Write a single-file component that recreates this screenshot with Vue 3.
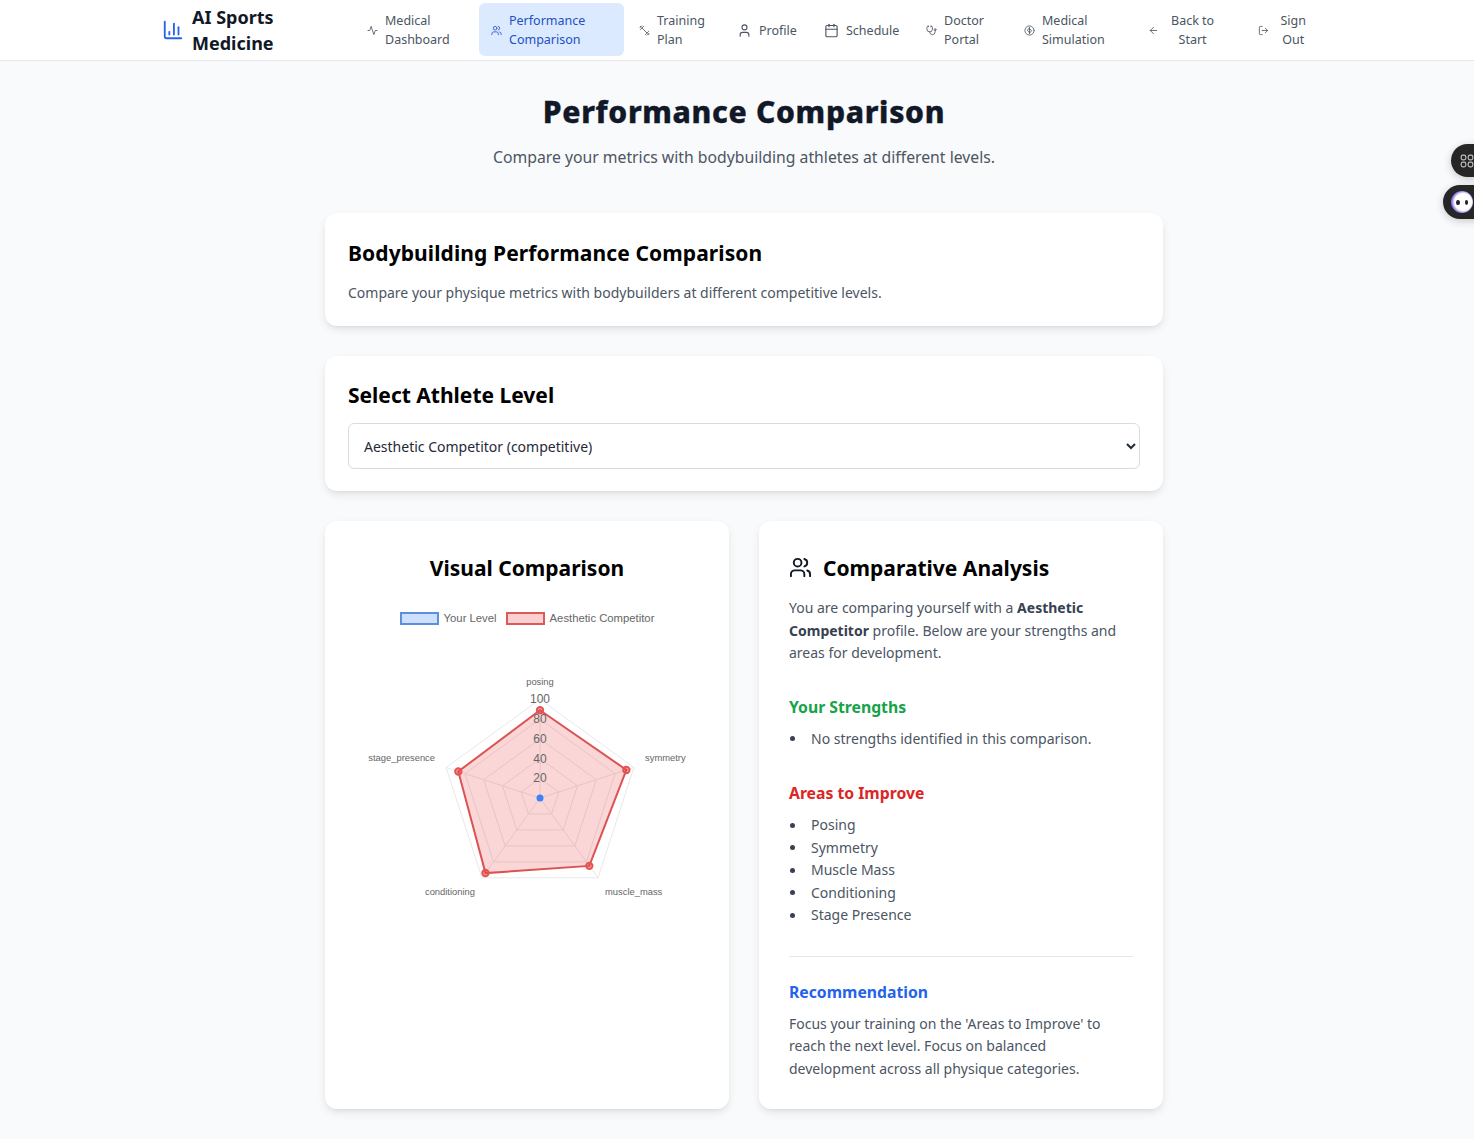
<script setup>
import { computed } from 'vue';

const icons = {
  chart: ['M3 3v16a2 2 0 0 0 2 2h16', 'M18 17V9', 'M13 17V5', 'M8 17v-3'],
  activity: ['M22 12h-4l-3 9L9 3l-3 9H2'],
  users: ['M16 21v-2a4 4 0 0 0-4-4H6a4 4 0 0 0-4 4v2', 'M13 7a4 4 0 1 1-8 0 4 4 0 0 1 8 0', 'M22 21v-2a4 4 0 0 0-3-3.87', 'M16 3.13a4 4 0 0 1 0 7.75'],
  dumbbell: ['m6.5 6.5 11 11', 'm21 21-1-1', 'm3 3 1 1', 'm18 22 4-4', 'm2 6 4-4', 'm3 10 7-7', 'm14 21 7-7'],
  user: ['M19 21v-2a4 4 0 0 0-4-4H9a4 4 0 0 0-4 4v2', 'M16 7a4 4 0 1 1-8 0 4 4 0 0 1 8 0'],
  calendar: ['M8 2v4', 'M16 2v4', 'M5 4h14a2 2 0 0 1 2 2v14a2 2 0 0 1-2 2H5a2 2 0 0 1-2-2V6a2 2 0 0 1 2-2z', 'M3 10h18'],
  stethoscope: ['M11 2v2', 'M5 2v2', 'M5 3H4a2 2 0 0 0-2 2v4a6 6 0 0 0 12 0V5a2 2 0 0 0-2-2h-1', 'M8 15a6 6 0 0 0 12 0v-3', 'M22 10a2 2 0 1 1-4 0 2 2 0 0 1 4 0'],
  simulation: ['M22 12a10 10 0 1 1-20 0 10 10 0 0 1 20 0', 'M12 5v14', 'M12 7c-3 1-4 3-4 5s2 3 4 3', 'M12 9c3 0 4 2 4 4s-2 3-4 3'],
  back: ['m12 19-7-7 7-7', 'M19 12H5'],
  logout: ['M9 21H5a2 2 0 0 1-2-2V5a2 2 0 0 1 2-2h4', 'm16 17 5-5-5-5', 'M21 12H9'],
};

const navItems = [
  { lines: ['Medical', 'Dashboard'], icon: 'activity', width: 121, size: 11 },
  { lines: ['Performance', 'Comparison'], icon: 'users', width: 145, size: 11, active: true },
  { lines: ['Training', 'Plan'], icon: 'dumbbell', width: 95, size: 11 },
  { lines: ['Profile'], icon: 'user', width: 84, size: 15 },
  { lines: ['Schedule'], icon: 'calendar', width: 99, size: 15 },
  { lines: ['Doctor', 'Portal'], icon: 'stethoscope', width: 95, size: 11 },
  { lines: ['Medical', 'Simulation'], icon: 'simulation', width: 121, size: 11 },
  { lines: ['Back to', 'Start'], icon: 'back', width: 106.5, size: 11, center: true },
  { lines: ['Sign', 'Out'], icon: 'logout', width: 78, size: 11, center: true },
];

const strengths = ['No strengths identified in this comparison.'];
const improvements = ['Posing', 'Symmetry', 'Muscle Mass', 'Conditioning', 'Stage Presence'];

// radar chart, chart.js-like geometry
const cx = 215;
const cy = 173;
const unit = 0.987;
const angles = [0, 1, 2, 3, 4].map((i) => (-90 + i * 72) * Math.PI / 180);
const toPoint = (value, i) => [cx + Math.cos(angles[i]) * value * unit, cy + Math.sin(angles[i]) * value * unit];
const polygon = (values) => values.map((v, i) => toPoint(v, i).map((n) => n.toFixed(1)).join(',')).join(' ');

const levels = [20, 40, 60, 80, 100];
const gridLines = levels.map((l) => polygon([l, l, l, l, l]));
const spokes = [0, 1, 2, 3, 4].map((i) => toPoint(100, i));
const competitor = [89, 92, 85, 94, 87];
const competitorLine = computed(() => polygon(competitor));
const competitorDots = computed(() => competitor.map((v, i) => toPoint(v, i)));
const axisLabels = [
  { text: 'posing', x: 215, y: 60, anchor: 'middle' },
  { text: 'symmetry', x: 320, y: 136, anchor: 'start' },
  { text: 'muscle_mass', x: 280, y: 270, anchor: 'start' },
  { text: 'conditioning', x: 150, y: 270, anchor: 'end' },
  { text: 'stage_presence', x: 110, y: 136, anchor: 'end' },
];
</script>

<template>
  <div class="page">
    <header class="topbar">
      <div class="brand">
        <svg class="brand-icon" viewBox="0 0 24 24"><path v-for="d in icons.chart" :key="d" :d="d" /></svg>
        <span class="brand-name">AI Sports Medicine</span>
      </div>
      <nav class="nav">
        <a
          v-for="item in navItems"
          :key="item.lines[0] + item.icon"
          class="nav-item"
          :class="{ active: item.active, center: item.center }"
          :style="{ width: item.width + 'px' }"
        >
          <svg class="nav-icon" :style="{ width: item.size + 'px', height: item.size + 'px' }" viewBox="0 0 24 24">
            <path v-for="d in icons[item.icon]" :key="d" :d="d" />
          </svg>
          <span class="nav-text">
            <span v-for="line in item.lines" :key="line" class="nav-line">{{ line }}</span>
          </span>
        </a>
      </nav>
    </header>

    <main class="content">
      <div class="page-head">
        <h1>Performance Comparison</h1>
        <p>Compare your metrics with bodybuilding athletes at different levels.</p>
      </div>

      <section class="card intro">
        <h2>Bodybuilding Performance Comparison</h2>
        <p>Compare your physique metrics with bodybuilders at different competitive levels.</p>
      </section>

      <section class="card level">
        <h2>Select Athlete Level</h2>
        <select class="level-select">
          <option>Aesthetic Competitor (competitive)</option>
          <option>Beginner (recreational)</option>
          <option>Pro Bodybuilder (elite)</option>
        </select>
      </section>

      <div class="columns">
        <section class="card chart-card">
          <h2 class="chart-title">Visual Comparison</h2>
          <div class="legend">
            <span class="swatch blue"></span><span class="legend-text">Your Level</span>
            <span class="swatch red"></span><span class="legend-text">Aesthetic Competitor</span>
          </div>
          <svg class="radar" width="404" height="340" viewBox="0 0 404 340">
            <polygon v-for="g in gridLines" :key="g" :points="g" class="grid" />
            <line v-for="(s, i) in spokes" :key="i" :x1="cx" :y1="cy" :x2="s[0]" :y2="s[1]" class="grid" />
            <polygon :points="competitorLine" class="area" />
            <circle v-for="(p, i) in competitorDots" :key="i" :cx="p[0]" :cy="p[1]" r="3.2" class="dot" />
            <circle :cx="cx" :cy="cy" r="3.5" class="dot-blue" />
            <text v-for="l in levels" :key="l" :x="cx" :y="cy - l * unit + 4" class="tick">{{ l }}</text>
            <text v-for="a in axisLabels" :key="a.text" :x="a.x" :y="a.y" :text-anchor="a.anchor" class="axis">{{ a.text }}</text>
          </svg>
        </section>

        <section class="card analysis">
          <h2 class="analysis-title">
            <svg class="title-icon" viewBox="0 0 24 24"><path v-for="d in icons.users" :key="d" :d="d" /></svg>
            Comparative Analysis
          </h2>
          <p class="body-text">You are comparing yourself with a <strong>Aesthetic Competitor</strong> profile. Below are your strengths and areas for development.</p>

          <h3 class="green">Your Strengths</h3>
          <ul>
            <li v-for="s in strengths" :key="s">{{ s }}</li>
          </ul>

          <h3 class="red-text">Areas to Improve</h3>
          <ul>
            <li v-for="s in improvements" :key="s">{{ s }}</li>
          </ul>

          <div class="recommendation">
            <h3 class="blue-text">Recommendation</h3>
            <p class="body-text">Focus your training on the 'Areas to Improve' to reach the next level. Focus on balanced development across all physique categories.</p>
          </div>
        </section>
      </div>
    </main>

    <div class="float-btn grid-btn">
      <svg viewBox="0 0 24 24" width="14" height="14"><rect x="2" y="2" width="8" height="8" rx="3" /><rect x="14" y="2" width="8" height="8" rx="3" /><rect x="2" y="14" width="8" height="8" rx="3" /><rect x="14" y="14" width="8" height="8" rx="3" /></svg>
    </div>
    <div class="float-btn bot-btn">
      <span class="bot-face"><i></i><i></i></span>
    </div>
  </div>
</template>

<style>
html, body {
  margin: 0;
  background: #f9fafb;
}
</style>

<style scoped>
.page {
  position: relative;
  min-height: 1139px;
  background: #f9fafb;
  font-family: "Noto Sans", "Open Sans", sans-serif;
  color: #111827;
  overflow: hidden;
}

/* Top bar */
.topbar {
  height: 61px;
  box-sizing: border-box;
  background: #fff;
  border-bottom: 1px solid #e5e7eb;
  display: flex;
  align-items: center;
  padding: 0 0 1px 162px;
}

.brand {
  display: flex;
  align-items: center;
  gap: 8px;
  width: 193px;
  margin-top: 1px;
  flex: none;
}

.brand-icon {
  width: 22px;
  height: 22px;
  fill: none;
  stroke: #2563eb;
  stroke-width: 2;
  stroke-linecap: round;
  stroke-linejoin: round;
}

.brand-name {
  width: 100px;
  font-size: 18px;
  line-height: 26px;
  font-weight: 700;
  color: #111827;
}

.nav {
  display: flex;
  align-items: center;
  gap: 3px;
}

.nav-item {
  display: flex;
  align-items: center;
  gap: 7px;
  box-sizing: border-box;
  height: 53px;
  padding: 1px 12px 0;
  border-radius: 6px;
  font-size: 12.5px;
  line-height: 19px;
  color: #4b5563;
  flex: none;
}

.nav-item.active {
  background: #dbeafe;
  color: #2450c4;
}

.nav-item.center {
  gap: 12px;
  text-align: center;
}

.nav-icon {
  flex: none;
  fill: none;
  stroke: currentColor;
  stroke-width: 1.8;
  stroke-linecap: round;
  stroke-linejoin: round;
}

.nav-line {
  display: block;
  white-space: nowrap;
}

/* Main column */
.content {
  width: 838px;
  margin: 0 0 0 325px;
  padding-bottom: 30px;
}

.page-head {
  text-align: center;
  padding: 28px 0 44px;
}

.page-head h1 {
  margin: 0;
  font-size: 30px;
  line-height: 45px;
  font-weight: 800;
  letter-spacing: 0.7px;
  -webkit-text-stroke: 0.4px #111827;
  color: #111827;
}

.page-head p {
  margin: 11px 0 0;
  font-size: 15.75px;
  line-height: 24px;
  color: #4b5563;
}

.card {
  background: #fff;
  border-radius: 12px;
  box-shadow: 0 4px 10px -1px rgba(0, 0, 0, 0.1), 0 2px 4px -2px rgba(0, 0, 0, 0.08);
  box-sizing: border-box;
}

.card h2 {
  margin: 0;
  font-size: 21px;
  line-height: 33px;
  font-weight: 700;
  color: #000;
}

.intro {
  height: 113px;
  padding: 24px 23px 0;
}

.intro h2 {
  letter-spacing: 0.1px;
}

.intro p {
  margin: 12px 0 0;
  font-size: 14px;
  line-height: 21px;
  color: #4b5563;
}

.level {
  height: 135px;
  margin-top: 30px;
  padding: 23px 23px 0;
}

.level-select {
  display: block;
  width: 100%;
  height: 46px;
  margin-top: 11px;
  padding: 0 11px;
  box-sizing: border-box;
  background: #fff;
  border: 1px solid #d8dce2;
  border-radius: 6px;
  font-family: inherit;
  font-size: 14px;
  color: #1f2937;
}

.columns {
  display: grid;
  grid-template-columns: 1fr 1fr;
  gap: 30px;
  margin-top: 30px;
}

.chart-card,
.analysis {
  height: 588px;
}

.chart-card {
  padding-top: 31px;
}

.chart-title {
  text-align: center;
}

.legend {
  display: flex;
  align-items: center;
  justify-content: center;
  margin-top: 26px;
  height: 14px;
  font-family: "Liberation Sans", Arial, sans-serif;
  font-size: 11.3px;
  color: #666;
}

.swatch {
  width: 39px;
  height: 13px;
  box-sizing: border-box;
  border: 2px solid;
  margin-right: 5px;
}

.swatch.blue {
  background: rgba(59, 130, 246, 0.25);
  border-color: #5b8fe0;
}

.swatch.red {
  background: rgba(239, 68, 68, 0.25);
  border-color: #dc5a5a;
}

.legend-text {
  margin-right: 9px;
}

.legend-text:last-child {
  margin-right: 0;
}

.radar {
  display: block;
}

.grid {
  fill: none;
  stroke: #e8e8e8;
  stroke-width: 1;
}

.area {
  fill: rgba(239, 68, 68, 0.22);
  stroke: #dc5252;
  stroke-width: 2;
}

.dot {
  fill: rgba(239, 68, 68, 0.5);
  stroke: #e25555;
  stroke-width: 2;
}

.dot-blue {
  fill: #3b82f6;
}

.tick {
  font-family: "Liberation Sans", Arial, sans-serif;
  font-size: 12px;
  fill: #666;
  text-anchor: middle;
}

.axis {
  font-family: "Liberation Sans", Arial, sans-serif;
  font-size: 9.4px;
  fill: #666;
}

.analysis {
  padding: 31px 30px 0;
}

.analysis-title {
  display: flex;
  align-items: center;
  gap: 11px;
}

.title-icon {
  width: 23px;
  height: 23px;
  margin-top: -3px;
  fill: none;
  stroke: #111827;
  stroke-width: 2;
  stroke-linecap: round;
  stroke-linejoin: round;
}

.body-text {
  margin: 12px 0 0;
  font-size: 14px;
  line-height: 22.5px;
  color: #4b5563;
}

.body-text strong {
  font-weight: 700;
  color: #374151;
}

.analysis h3 {
  margin: 0;
  font-size: 15.75px;
  line-height: 26px;
  font-weight: 700;
}

.analysis .body-text + h3 {
  margin-top: 29px;
}

.analysis ul + h3 {
  margin-top: 30px;
}

.green {
  color: #16a34a;
}

.red-text {
  color: #dc2626;
}

.blue-text {
  color: #2563eb;
}

.analysis ul {
  margin: 8px 0 0;
  padding: 0;
  list-style: none;
  font-size: 14px;
  line-height: 22.5px;
  color: #4b5563;
}

.analysis li {
  display: flex;
  align-items: center;
}

.analysis li::before {
  content: "";
  flex: none;
  width: 5px;
  height: 5px;
  margin: 0 16.5px 0 0.5px;
  border-radius: 50%;
  background: #374151;
}

.recommendation {
  margin-top: 29px;
  padding-top: 22px;
  border-top: 1px solid #e5e7eb;
}

.recommendation .body-text {
  margin-top: 8px;
}

/* Side widgets */
.float-btn {
  position: absolute;
  display: flex;
  align-items: center;
  background: #262626;
  box-shadow: 0 2px 8px rgba(0, 0, 0, 0.2);
}

.grid-btn {
  top: 144px;
  left: 1451px;
  width: 40px;
  height: 33px;
  padding-left: 9px;
  box-sizing: border-box;
  border-radius: 17px 0 0 17px;
}

.grid-btn svg {
  fill: none;
  stroke: #bdbdbd;
  stroke-width: 2;
}

.bot-btn {
  top: 185px;
  left: 1443px;
  width: 50px;
  height: 34px;
  padding-left: 8px;
  box-sizing: border-box;
  border-radius: 17px 0 0 17px;
}

.bot-face {
  display: flex;
  align-items: center;
  justify-content: center;
  gap: 5px;
  width: 22px;
  height: 22px;
  border-radius: 50%;
  background: radial-gradient(circle at 55% 50%, #fff 0 52%, #8f7bf0 68%, #3f2fd0 100%);
}

.bot-face i {
  display: block;
  width: 3.5px;
  height: 5px;
  border-radius: 50%;
  background: #222;
}
</style>
